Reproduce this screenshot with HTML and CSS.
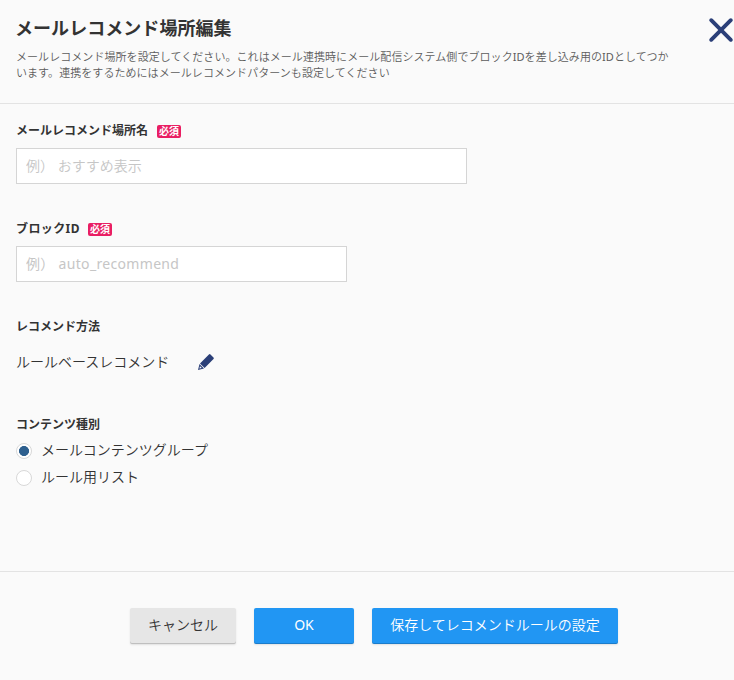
FILE: index.html
```html
<!DOCTYPE html>
<html lang="ja">
<head>
<meta charset="utf-8">
<title>メールレコメンド場所編集</title>
<link rel="stylesheet" href="styles.css">
</head>
<body>
<form class="dialog">
  <header class="head">
    <div class="head-text">
      <h1>メールレコメンド場所編集</h1>
      <p><span class="line">メールレコメンド場所を設定してください。これはメール連携時にメール配信システム側でブロック<span class="latin">ID</span>を差し込み用の<span class="latin">ID</span>としてつか</span><span class="line">います。連携をするためにはメールレコメンドパターンも設定してください</span></p>
    </div>
    <button class="close" type="button" aria-label="閉じる">
      <svg width="26" height="26" viewBox="0 0 26 26"><path d="M3.2 3.2 22.8 22.8M22.8 3.2 3.2 22.8" stroke="#2b3f78" stroke-width="3.9" stroke-linecap="round"/></svg>
    </button>
  </header>
  <main class="body">
    <section class="field">
      <label class="label" for="name">メールレコメンド場所名<span class="req">必須</span></label>
      <input class="input wide" id="name" type="text" placeholder="例） おすすめ表示">
    </section>
    <section class="field">
      <label class="label" for="block"><span class="block-name">ブロックID</span><span class="req">必須</span></label>
      <input class="input block-input" id="block" type="text" placeholder="例） auto_recommend">
    </section>
    <section class="field">
      <div class="label">レコメンド方法</div>
      <div class="method"><span>ルールベースレコメンド</span>
        <svg width="18" height="18" viewBox="0 0 18 18" fill="#2b3f78"><path d="M11.9 1.5q.8-.8 1.6 0l3 3q.8.8 0 1.6L7.6 15 3 10.4z"/><path fill-rule="evenodd" d="M2.5 11 7 15.5 1 17zM3 13.2 2.4 15.6 4.8 15z"/></svg>
      </div>
    </section>
    <section class="kinds">
      <div class="label">コンテンツ種別</div>
      <label class="choice"><input type="radio" name="kind" checked><span>メールコンテンツグループ</span></label>
      <label class="choice"><input type="radio" name="kind"><span>ルール用リスト</span></label>
    </section>
  </main>
  <footer class="foot">
    <button class="btn cancel" type="button">キャンセル</button>
    <button class="btn ok" type="button">OK</button>
    <button class="btn save" type="button">保存してレコメンドルールの設定</button>
  </footer>
</form>
</body>
</html>
```
FILE: styles.css
```css
* { box-sizing: border-box; }
body {
  margin: 0;
  background: #fafafa;
  color: #333;
  font: 350 14px/20px "Noto Sans", "Noto Sans CJK JP", sans-serif;
}
button, input { font: inherit; margin: 0; }
.dialog { height: 680px; display: flex; flex-direction: column; overflow: hidden; }
.head {
  height: 104px;
  flex: none;
  display: flex;
  justify-content: space-between;
  padding: 16px 0 0 16px;
  border-bottom: 1px solid #e3e3e3;
}
h1 { margin: 0 0 0 -1px; font-size: 18px; line-height: 24px; font-weight: 700; letter-spacing: .05px; }
p { margin: 9px 0 0; font-size: 11px; line-height: 16px; color: #5c5c5c; letter-spacing: .06px; }
.line { display: block; white-space: nowrap; }
.latin { font-weight: 400; }
.close { width: 26px; height: 26px; padding: 0; border: 0; background: none; margin-top: 1px; }
.close svg { display: block; }
.body { flex: none; height: 467px; padding: 18px 16px 0; }
.field { height: 98px; }
.label {
  display: flex;
  align-items: center;
  height: 18px;
  font-size: 12px;
  line-height: 18px;
  font-weight: 700;
}
.block-name { width: 63px; white-space: nowrap; letter-spacing: .4px; }
.req {
  width: 24px;
  height: 13px;
  margin: 0 0 0 9px;
  border-radius: 2px;
  background: #e91e63;
  color: #fff;
  font-size: 10px;
  line-height: 13px;
  text-align: center;
}
.input {
  display: block;
  width: 331px;
  height: 36px;
  margin-top: 8px;
  padding: 0 9px 2px;
  border: 1px solid #d5d5d5;
  background: #fff;
}
.wide { width: 451px; }
.block-input { font-weight: 400; letter-spacing: .32px; }
.input::placeholder { color: #c6c6c6; opacity: 1; }
.method { display: flex; align-items: center; height: 20px; margin-top: 16px; gap: 28px; }
.kinds .label { margin-bottom: 5px; }
.choice { display: flex; height: 27px; gap: 9px; }
.choice span { margin-top: 1px; }
.choice input {
  appearance: none;
  width: 16px;
  height: 16px;
  margin-top: 4px;
  border: 1px solid #d8d8d8;
  border-radius: 50%;
  background: #fff;
}
.choice input:checked { background: radial-gradient(circle, #2d5f8e 4.7px, #fff 5.3px); }
.foot {
  flex: 1;
  display: flex;
  align-items: flex-start;
  gap: 18px;
  padding: 36px 0 0 130px;
  border-top: 1px solid #e3e3e3;
}
.btn {
  height: 36px;
  padding: 0 0 2px;
  border: 0;
  border-radius: 2px;
  background: #2196f3;
  color: #fff;
  box-shadow: inset 0 -1px rgba(0, 0, 0, .17), 0 1px 2px rgba(0, 0, 0, .1);
}
.cancel { width: 106px; background: #e6e6e6; color: #333; }
.ok { width: 100px; font-weight: 400; }
.save { width: 246px; }
```
